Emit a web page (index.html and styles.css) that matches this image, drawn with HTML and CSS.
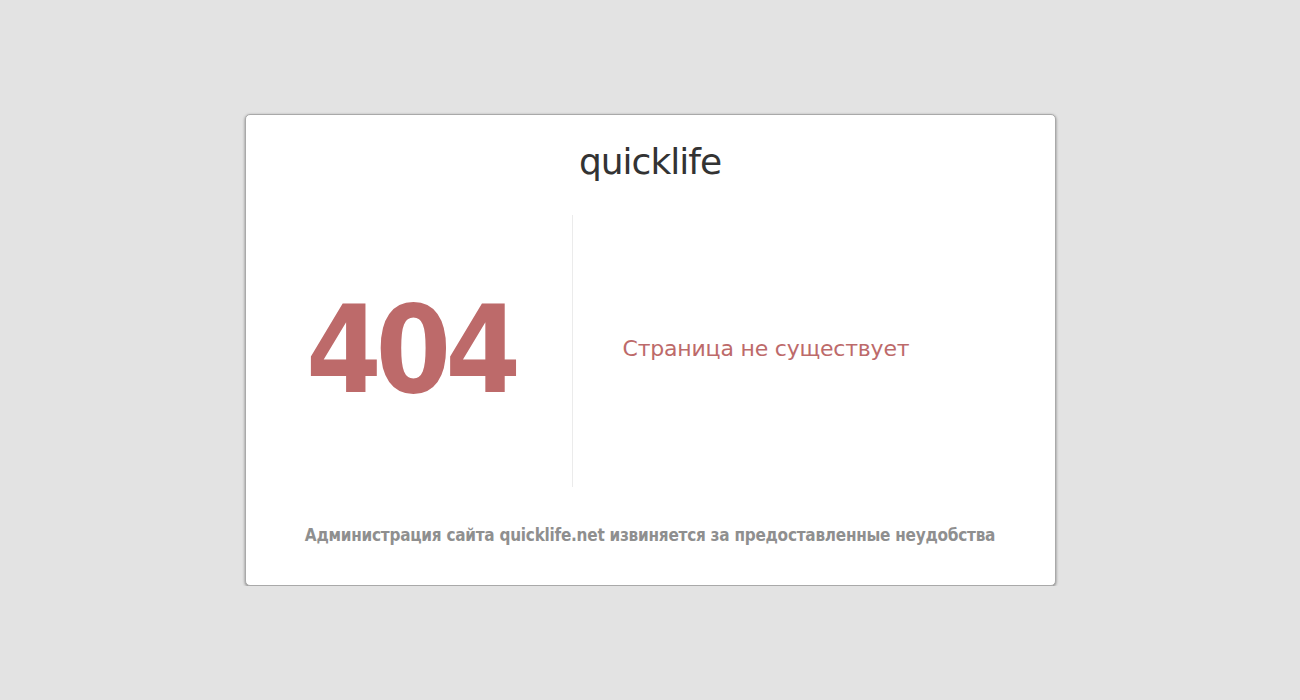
FILE: index.html
```html
<!DOCTYPE html>
<html lang="ru">
<head>
<meta charset="utf-8">
<title>404</title>
<link rel="stylesheet" href="styles.css">
</head>
<body>
<div class="page">
  <div class="card">
    <div class="logo">quicklife</div>
    <div class="main">
      <div class="code">404</div>
      <div class="message">Страница не существует</div>
    </div>
    <div class="footer">Администрация сайта quicklife.net извиняется за предоставленные неудобства</div>
  </div>
</div>
</body>
</html>
```
FILE: styles.css
```css
html, body {
  margin: 0;
  padding: 0;
  background: #e3e3e3;
  font-family: "DejaVu Sans", Verdana, sans-serif;
}
.page {
  display: flex;
  justify-content: center;
  padding-top: 114px;
}
.card {
  width: 809px;
  height: 470px;
  background: #fff;
  border: 1px solid #a9a9a9;
  border-radius: 5px;
  box-shadow: 0 1px 3px rgba(0,0,0,0.45);
  display: flex;
  flex-direction: column;
  align-items: center;
}
.logo {
  margin-top: 26px;
  font-size: 36px;
  line-height: 42px;
  color: #333;
  letter-spacing: -1px;
}
.main {
  margin-top: 32px;
  width: 100%;
  height: 272px;
  display: flex;
}
.code {
  width: 327px;
  border-right: 1px solid #ebebeb;
  display: flex;
  align-items: center;
  justify-content: center;
  font-family: "DejaVu Sans Condensed", "DejaVu Sans", sans-serif;
  font-size: 121px;
  font-weight: bold;
  color: #bd6a6a;
  letter-spacing: -6px;
  padding-left: 4px;
  padding-bottom: 2px;
  box-sizing: border-box;
}
.message {
  flex: 1;
  display: flex;
  align-items: center;
  padding-left: 50px;
  padding-bottom: 6px;
  font-size: 22px;
  color: #bd6a6a;
  letter-spacing: -0.2px;
}
.footer {
  margin-top: 38px;
  font-family: "DejaVu Sans Condensed", "DejaVu Sans", sans-serif;
  font-size: 17px;
  font-weight: bold;
  color: #8f8f8f;
  letter-spacing: -0.25px;
}
```
